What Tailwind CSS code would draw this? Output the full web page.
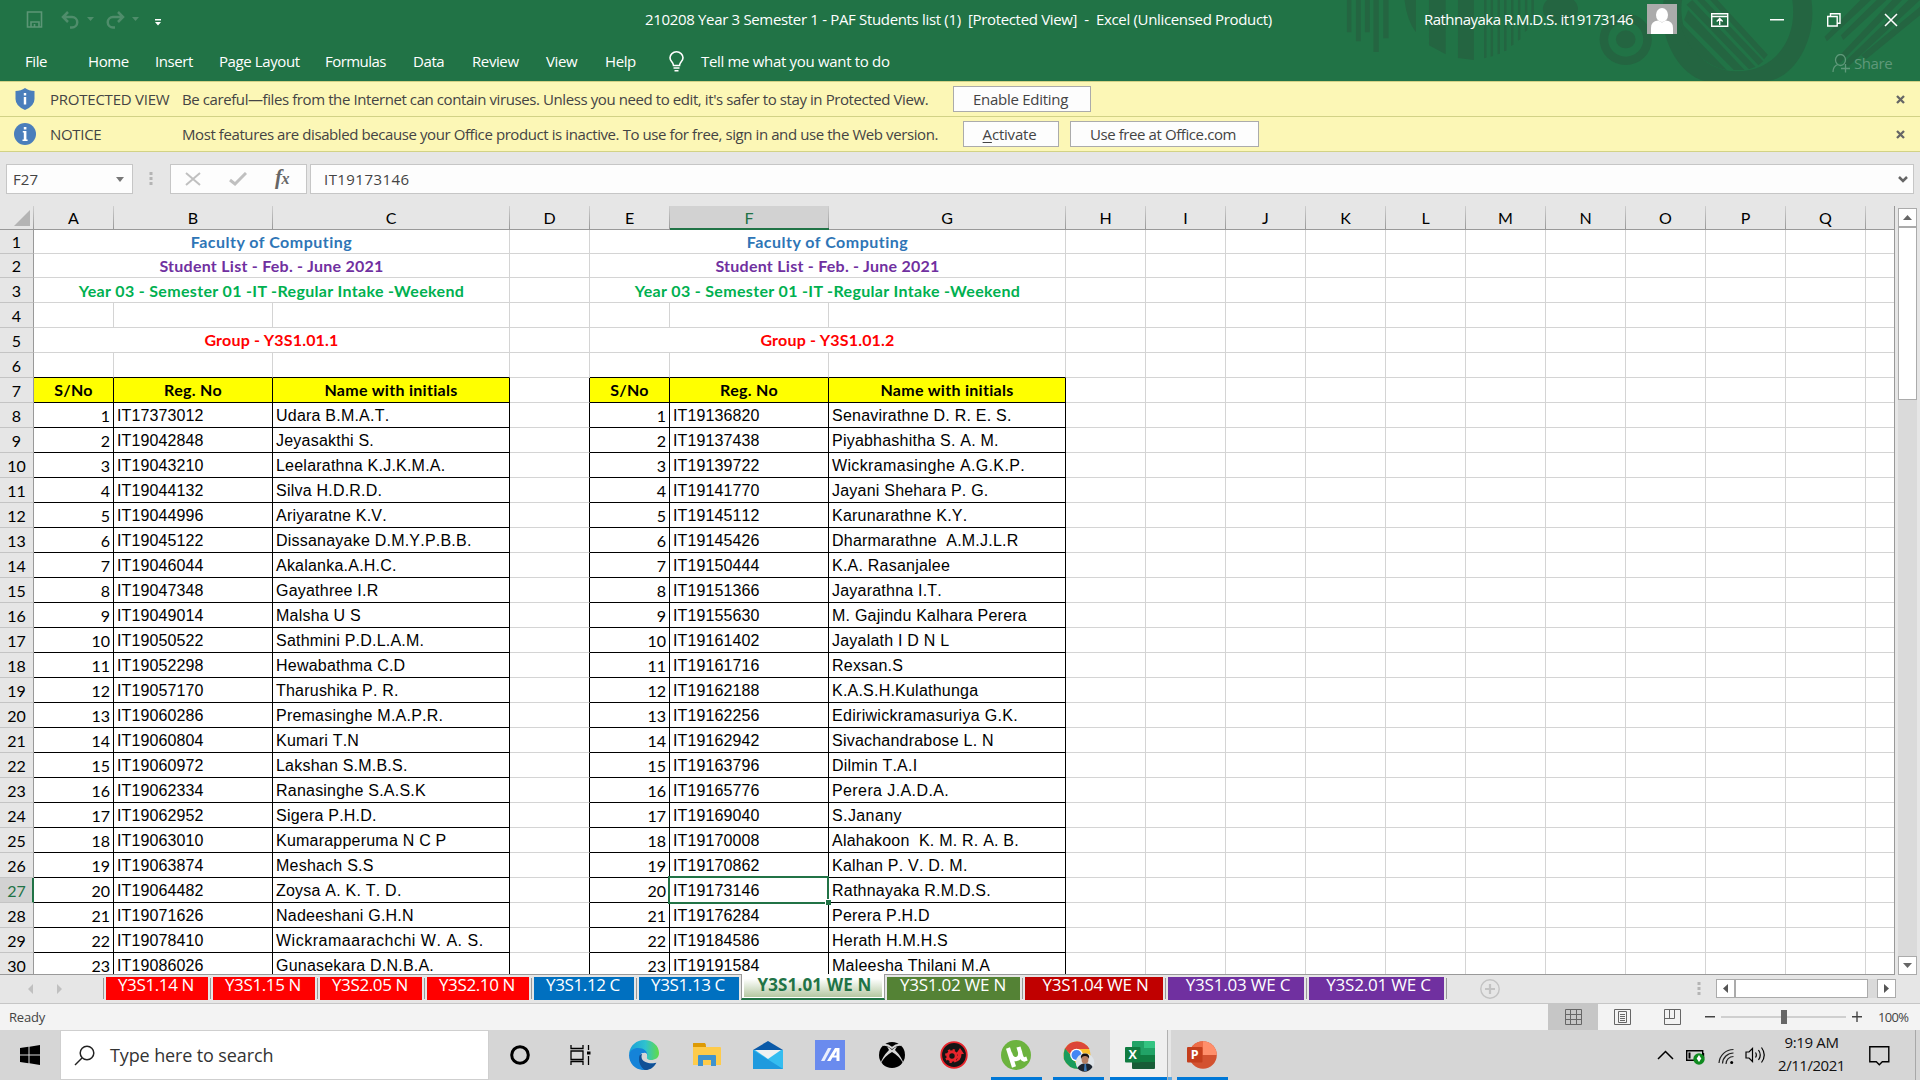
<!DOCTYPE html>
<html lang="en">
<head>
<meta charset="utf-8">
<title>210208 Year 3 Semester 1 - PAF Students list (1) - Excel</title>
<script src="https://cdn.jsdelivr.net/npm/@tailwindcss/browser@4"></script>
</head>
<body class="w-[1920px] h-[1080px] overflow-hidden flex flex-col bg-[#e6e6e6] font-['Open_Sans',sans-serif] text-[15px] text-[#444]">

<!-- Title bar and ribbon tabs -->
<header class="relative h-[81px] shrink-0 bg-[#217346] text-white flex flex-col">
  <svg class="absolute right-0 top-0" width="640" height="81" viewBox="0 0 1568 243" preserveAspectRatio="none" fill="#246541">
    <path d="M164 0h11v97h-11zM186 0h12v124h-12zM208 0h12v97h-12zM229 0h13v156h-13zM253 0h13v115h-13zM305 0h28v97q-22-35-28-97zM365 0h41v163l-41-27zM436 0h39v180l-39-6zM500 0h6v173l-6 2zM516 0h6v168l-6 2zM533 0h6v161l-6 2zM549 0h6v152l-6 2zM566 0h6v134l-6 4zM583 0h6v118l-6 4zM600 0h6v90l-6 6zM616 0h6v55l-6 8z"/>
    <circle cx="687" cy="28" r="43"/>
    <ellipse cx="847" cy="118" rx="64" ry="77"/><ellipse cx="847" cy="118" rx="43" ry="52" fill="#217346"/><ellipse cx="847" cy="118" rx="24" ry="27"/>
    <path d="M940 0H985C975 75 1010 214 1120 214C1210 214 1270 120 1255 0H1302C1318 130 1250 243 1190 243H1040C970 220 925 100 940 0Z"/>
    <path d="M980 65l115 146-22-8C1020 175 990 125 980 65zM1000 30l138 180h-26L990 60zM1010 0l155 200-16 8L996 14zM1040 0l144 184-12 12L1022 0zM1072 0l123 164-9 14L1054 0z"/>
    <path d="M1422 0h26L1340 124l-6-14zM1462 0h24L1380 120l-6-14zM1500 0h24L1372 190l-14-6zM1540 0h28L1392 200l-14-8zM1568 20v26L1436 178l-12-12z"/>
  </svg>
  <div class="relative h-[39px] flex items-center">
    <div class="w-[645px] pl-[26px] flex items-center text-white/30">
      <svg width="18" height="17" viewBox="0 0 18 17" fill="none" stroke="#5c9676" stroke-width="1.6"><path d="M1.5 1h14v15h-14zM5 16v-5h8v5M8.500 13v3"/></svg>
      <svg class="ml-[17px]" width="20" height="18" viewBox="0 0 20 18" fill="none" stroke="#4f8d6b" stroke-width="2.500"><path d="M7 1L2 6l5 5M2 6h9a5 5 0 0 1 0 10.500H9"/></svg>
      <svg class="ml-[6px] -mt-px" width="7" height="4"><path d="M0 0h7L3.500 4z" fill="#4f8d6b"/></svg>
      <svg class="ml-[11px]" width="20" height="18" viewBox="0 0 20 18" fill="none" stroke="#4f8d6b" stroke-width="2.500"><path d="M13 1l5 5-5 5M18 6H8a5 5 0 0 0 0 10.500H10"/></svg>
      <svg class="ml-[7px] -mt-px" width="7" height="4"><path d="M0 0h7L3.500 4z" fill="#4f8d6b"/></svg>
      <svg class="ml-[16px] mt-[5px]" width="6" height="7"><path d="M0 0h6v1.500H0zM0 3h6L3 6.500z" fill="#fff"/></svg>
    </div>
    <div class="w-[779px] whitespace-pre tracking-[-0.33px]">210208 Year 3 Semester 1 - PAF Students list (1)  [Protected View]  -  Excel (Unlicensed Product)</div>
    <div class="w-[223px] whitespace-nowrap tracking-[-0.53px]">Rathnayaka R.M.D.S. it19173146</div>
    <svg class="mt-[-1px]" width="30" height="30" viewBox="0 0 30 30"><path fill="#ababab" d="M0 0h30v30H0z"/><ellipse cx="15" cy="11" rx="6" ry="7" fill="#fff"/><path fill="#fff" d="M4 30V24q0-7 7-7.500l4 2 4-2q7 .5 7 7.500v6z"/></svg>
    <svg class="ml-[34px]" width="18" height="14" fill="none" stroke="#fff" stroke-width="1.400"><path d="M.7.7h16v12.500H.7zM1 3.500h16M8.700 12V6M5.700 8.500l3-3 3 3"/></svg>
    <svg class="ml-[41px]" width="14" height="2"><path fill="#fff" d="M0 0h14v1.500H0z"/></svg>
    <svg class="ml-[43px]" width="14" height="14" fill="none" stroke="#fff" stroke-width="1.400"><path d="M.7 3.500h9.500v9.500H.7zM3.500 3.500V.7h9.500v9.500H10"/></svg>
    <svg class="ml-[43px]" width="14" height="14" stroke="#fff" stroke-width="1.500"><path d="M1 1l12 12M13 1L1 13"/></svg>
  </div>
  <nav class="relative h-[42px] pl-[25px] flex items-center tracking-[-0.4px] whitespace-nowrap pb-[2px] pt-[5px]">
    <div class="w-[63px]">File</div><div class="w-[67px]">Home</div><div class="w-[64px]">Insert</div><div class="w-[106px]">Page Layout</div><div class="w-[88px] tracking-[-0.55px]">Formulas</div><div class="w-[59px]">Data</div><div class="w-[74px]">Review</div><div class="w-[59px]">View</div><div class="w-[64px]">Help</div>
    <svg class="w-[15px] shrink-0" width="15" height="21" viewBox="0 0 15 21" fill="none" stroke="#fff" stroke-width="1.600"><path d="M4.500 14.500C4.500 11 1 10.500 1 6.800a6.500 6 0 0 1 13 0C14 10.500 10.500 11 10.500 14.500zM4.500 17h6M5.500 19.800h4"/></svg>
    <div class="ml-[17px] w-[1131px] tracking-[-0.32px]">Tell me what you want to do</div>
    <svg class="mt-[3px]" width="19" height="19" fill="none" stroke="#5f997a" stroke-width="1.300"><ellipse cx="8.500" cy="6" rx="5" ry="5.500"/><path d="M1 18q0-6 5-7.500M13.500 10v8.500M9 14.500h9"/></svg>
    <div class="ml-[3px] mt-[4px] text-[#5f997a]">Share</div>
  </nav>
</header>

<!-- Message bars -->
<div class="h-[36px] shrink-0 border-y border-[#d2d286] bg-[#fcf7b6] flex items-center whitespace-nowrap">
  <svg class="ml-[15px]" width="20" height="22" viewBox="0 0 20 22"><path fill="#4a7ebb" d="M10 0q4 3 9.500 3V11q0 7-9.500 11Q.5 18 .5 11V3Q6 3 10 0z"/><path fill="#fff" d="M8.800 5h2.400v2.400H8.800zM8.800 9h2.400v7.500H8.800z"/></svg>
  <div class="ml-[15px] w-[132px] tracking-[-0.23px]">PROTECTED VIEW</div>
  <div class="w-[771px] tracking-[-0.41px]">Be careful—files from the Internet can contain viruses. Unless you need to edit, it's safer to stay in Protected View.</div>
  <div class="w-[138px] h-[26px] bg-[#fdfdfd] border border-[#ababab] flex items-center justify-center pr-[3px] tracking-[-0.28px]">Enable Editing</div>
  <svg class="ml-auto mr-[15px]" width="9" height="9" stroke="#666" stroke-width="2.300"><path d="M1 1l7 7M8 1L1 8"/></svg>
</div>
<div class="h-[35px] shrink-0 border-b border-[#d2d286] bg-[#fcf7b6] flex items-center whitespace-nowrap">
  <svg class="ml-[14px]" width="22" height="22" viewBox="0 0 22 22"><circle cx="11" cy="11" r="11" fill="#4a7ebb"/><path fill="#fff" d="M9.800 4h2.600v2.600H9.800zM8.800 8h3.600v8.500h1.200V18H8.500v-1.500h1.300V9.500h-1z"/></svg>
  <div class="ml-[14px] w-[132px] tracking-[-0.3px]">NOTICE</div>
  <div class="w-[781px] tracking-[-0.41px]">Most features are disabled because your Office product is inactive. To use for free, sign in and use the Web version.</div>
  <div class="w-[96px] h-[26px] bg-[#fdfdfd] border border-[#ababab] flex items-center justify-center pr-[3px] tracking-[-0.2px]"><span class="underline underline-offset-2">A</span>ctivate</div>
  <div class="ml-[11px] w-[189px] h-[26px] bg-[#fdfdfd] border border-[#ababab] flex items-center justify-center pr-[3px] tracking-[-0.41px]">Use free at Office.com</div>
  <svg class="ml-auto mr-[15px]" width="9" height="9" stroke="#666" stroke-width="2.300"><path d="M1 1l7 7M8 1L1 8"/></svg>
</div>

<!-- Formula bar -->
<div class="h-[54px] shrink-0 pt-[12px] flex items-start">
  <div class="ml-[6px] w-[127px] h-[30px] bg-[#fdfdfd] border border-[#c6c6c6] flex items-center pl-[6px] pr-[8px] justify-between"><span class="tracking-[0.1px]">F27</span><svg width="8" height="5"><path fill="#777" d="M0 0h8L4 5z"/></svg></div>
  <svg class="ml-[16px] mt-[8px]" width="4" height="14"><path fill="#b4b4b4" d="M.5 0h3v3h-3zM.5 5h3v3h-3zM.5 10h3v3h-3z"/></svg>
  <div class="ml-[17px] w-[137px] h-[30px] bg-[#fdfdfd] border border-[#c6c6c6] flex items-center">
    <svg class="ml-[14px]" width="16" height="14" stroke="#c0c0c0" stroke-width="2"><path d="M1 1l14 12M15 1L1 13"/></svg>
    <svg class="ml-[28px]" width="18" height="14" fill="none" stroke="#c0c0c0" stroke-width="3"><path d="M1 8l5 4L17 1"/></svg>
    <span class="ml-[28px] w-[20px] -mt-[3px] font-['Liberation_Serif',serif] italic font-bold text-[21px] text-[#666] tracking-[-0.5px]">f<span class="text-[16px]">x</span></span>
  </div>
  <div class="ml-[3px] w-[1604px] h-[30px] bg-[#fdfdfd] border border-[#c6c6c6] flex items-center justify-between pl-[13px] pr-[5px]"><span class="tracking-[0.44px]">IT19173146</span><svg width="10" height="7" fill="none" stroke="#666" stroke-width="2.500"><path d="M1 1l4 4 4-4"/></svg></div>
</div>

<!-- Worksheet -->
<main class="h-[769px] shrink-0 flex">
  <div class="w-[1895px] h-[769px] overflow-hidden border-r border-b border-[#999] bg-white font-['Lato',sans-serif] text-[16px] text-black flex flex-col">
    <div id="cols" class="flex h-[24px] shrink-0 bg-[#e6e6e6]"></div>
    <div id="rows" class="flex flex-col"></div>
  </div>
  <div class="w-[25px] pl-[3px] pt-[2px] bg-[#e6e6e6]">
    <div class="w-[19px] h-[767px] bg-[#dadada] flex flex-col">
      <div class="h-[19px] bg-white border border-[#ababab] flex items-center justify-center"><svg width="9" height="5"><path fill="#666" d="M0 5h9L4.500 0z"/></svg></div>
      <div class="h-[173px] bg-white border border-[#ababab]"></div>
      <div class="mt-auto h-[19px] bg-white border border-[#ababab] flex items-center justify-center"><svg width="9" height="5"><path fill="#666" d="M0 0h9L4.500 5z"/></svg></div>
    </div>
  </div>
</main>

<!-- Sheet tabs -->
<div class="h-[29px] shrink-0 border-b border-[#c6c6c6] flex items-start text-[17px] leading-[15px] text-white whitespace-nowrap">
  <svg class="ml-[28px] mt-[9px]" width="34" height="10"><path fill="#c0c0c0" d="M5 0v10L0 5zM29 0v10l5-5z"/></svg>
  <div class="ml-[41px] flex">
    <div class="w-px h-[21px] mt-[3px] bg-[#999]"></div>
    <div class="mx-[2px] mt-[2px] w-[102px] h-[23px] bg-[#ff0000] text-center pr-[2px] tracking-[-0.38px]">Y3S1.14 N</div><div class="w-px h-[21px] mt-[3px] bg-[#999]"></div>
    <div class="mx-[2px] mt-[2px] w-[102px] h-[23px] bg-[#ff0000] text-center pr-[2px] tracking-[-0.38px]">Y3S1.15 N</div><div class="w-px h-[21px] mt-[3px] bg-[#999]"></div>
    <div class="mx-[2px] mt-[2px] w-[102px] h-[23px] bg-[#ff0000] text-center pr-[2px] tracking-[-0.38px]">Y3S2.05 N</div><div class="w-px h-[21px] mt-[3px] bg-[#999]"></div>
    <div class="mx-[2px] mt-[2px] w-[102px] h-[23px] bg-[#ff0000] text-center pr-[2px] tracking-[-0.38px]">Y3S2.10 N</div><div class="w-px h-[21px] mt-[3px] bg-[#999]"></div>
    <div class="mx-[2px] mt-[2px] w-[100px] h-[23px] bg-[#0070c0] text-center pr-[2px] tracking-[-0.38px]">Y3S1.12 C</div><div class="w-px h-[21px] mt-[3px] bg-[#999]"></div>
    <div class="mx-[2px] mt-[2px] w-[100px] h-[23px] bg-[#0070c0] text-center pr-[2px] tracking-[-0.38px]">Y3S1.13 C</div>
    <div class="-mt-px w-[144px] h-[26px] border-x border-b-2 border-x-[#999] border-b-[#217346] bg-white px-[2px]"><div class="h-[23px] pt-[3px] pl-[3px] bg-linear-to-b from-white from-20% to-[#b5c8a2] text-center font-bold text-[#217346] tracking-[0.14px]">Y3S1.01 WE N</div></div>
    <div class="mx-[2px] mt-[2px] w-[133px] h-[23px] bg-[#548235] text-center pr-[1px] tracking-[-0.25px]">Y3S1.02 WE N</div><div class="w-px h-[21px] mt-[3px] bg-[#999]"></div>
    <div class="mx-[2px] mt-[2px] w-[138px] h-[23px] bg-[#c00000] text-center pl-[3px] tracking-[-0.25px]">Y3S1.04 WE N</div><div class="w-px h-[21px] mt-[3px] bg-[#999]"></div>
    <div class="mx-[2px] mt-[2px] w-[136px] h-[23px] bg-[#7030a0] text-center pl-[4px] tracking-[-0.2px]">Y3S1.03 WE C</div><div class="w-px h-[21px] mt-[3px] bg-[#999]"></div>
    <div class="mx-[2px] mt-[2px] w-[135px] h-[23px] bg-[#7030a0] text-center pl-[4px] tracking-[-0.2px]">Y3S2.01 WE C</div><div class="w-px h-[21px] mt-[3px] bg-[#999]"></div>
  </div>
  <svg class="ml-auto mt-[4px]" width="20" height="20" fill="none" stroke="#c3c3c3"><circle cx="10" cy="10" r="9.200" stroke-width="1.400"/><path stroke-width="2.200" d="M10 5v10M5 10h10"/></svg>
  <svg class="ml-[197px] mt-[7px]" width="4" height="14"><path fill="#b4b4b4" d="M.5 0h3v3h-3zM.5 5h3v3h-3zM.5 10h3v3h-3z"/></svg>
  <div class="ml-[15px] mr-[24px] mt-[4px] w-[180px] h-[19px] bg-[#dadada] flex">
    <div class="w-[19px] bg-white border border-[#ababab] flex items-center justify-center"><svg width="5" height="9"><path fill="#555" d="M5 0v9L0 4.500z"/></svg></div>
    <div class="w-[133px] bg-white border border-[#ababab]"></div>
    <div class="ml-auto w-[19px] bg-white border border-[#ababab] flex items-center justify-center"><svg width="5" height="9"><path fill="#555" d="M0 0v9l5-4.500z"/></svg></div>
  </div>
</div>

<!-- Status bar -->
<div class="h-[26px] shrink-0 bg-[#f3f3f3] flex items-center text-[13px]">
  <div class="pl-[9px] pt-[2px] w-[1548px] tracking-[-0.2px]">Ready</div>
  <div class="w-[50px] h-[26px] bg-[#c6c6c6] flex items-center justify-center"><svg width="17" height="16" fill="none" stroke="#666"><path d="M.5.5h16v15H.5zM5.500 0v16M11.500 0v16M0 5.500h17M0 10.500h17"/></svg></div>
  <svg class="ml-[16px]" width="17" height="16" fill="none" stroke="#666"><path d="M.5.500h16v15H.5zM4.500 2.500h8v11h-8zM6 5.500h5M6 7.500h5M6 9.500h5M6 11.500h5"/></svg>
  <svg class="ml-[33px]" width="17" height="16" fill="none" stroke="#666"><path d="M.5.500h16v15H.5zM.5 9.500h10V.5M5.500 0v9.500"/></svg>
  <svg class="ml-[24px]" width="158" height="16"><path fill="#444" d="M0 7h10v1.400H0zM147 7h10v1.400h-10zM151.300 2.500h1.400v10.500h-1.400z"/><path fill="#ababab" d="M16 7.500h125v1H16z"/><path fill="#666" d="M76 1h6v14h-6z"/></svg>
  <div class="ml-[15px] pt-[2px] tracking-[-0.7px]">100%</div>
</div>

<!-- Taskbar -->
<footer class="relative h-[50px] shrink-0 bg-[#d6d6d6] flex text-black">
  <div class="w-[60px] flex items-center justify-center"><svg width="20" height="20"><path d="M0 3l8.500-1.200V9.500H0zM9.500 1.700L20 0v9.500H9.500zM0 10.500h8.500v7.700L0 17zM9.500 10.500H20V20L9.500 18.300z"/></svg></div>
  <div class="w-[429px] border border-[#cfcfcf] bg-white flex items-center text-[18px] text-[#333]">
    <svg class="ml-[13px]" width="21" height="21" fill="none" stroke="#222" stroke-width="1.500"><circle cx="13" cy="8" r="6.800"/><path d="M8 13L1 20"/></svg>
    <div class="ml-[15px] tracking-[-0.12px]">Type here to search</div>
  </div>
  <!-- pinned apps -->
  <div class="w-[62px] flex items-center justify-center"><svg width="20" height="20" fill="none" stroke="#000" stroke-width="3"><circle cx="10" cy="10" r="8.300"/></svg></div>
  <div class="w-[59px] flex items-center justify-center"><svg width="21" height="20" fill="none" stroke="#000" stroke-width="1.300"><path d="M1 0v3.500h12V0M1 6h12v8.500H1zM1 20v-3.500h12V20M18.500 0v5M18.500 11v9"/><path stroke-width="3" d="M17 8h3.500"/></svg></div>
  <div class="w-[67px] flex items-center justify-center">
    <svg width="30" height="30" viewBox="0 0 30 30"><defs><linearGradient id="eg" x1="0" x2="1"><stop offset="0" stop-color="#1a9fd8"/><stop offset=".55" stop-color="#2fc2cf"/><stop offset="1" stop-color="#62dc45"/></linearGradient></defs><path fill="#0f5aa8" d="M10 14l4 1q3 9 13 7.500Q23 30 15 30 7 29 8 19z"/><path fill="url(#eg)" d="M0 14C1 5 8 0 15 0c9 0 15 6 15 13 0 5-4 7-8 7-3 0-5-1-4-3 1-6-8-11-18-3z"/><path fill="#1583d8" d="M0 15C1 10 5 8 9 8c6 0 9.500 3.500 9.500 7.500C16 11 10 13 10 18c0 5 3 9 6 12C7 30.500 0 24 0 15z"/><path fill="#0f5096" d="M10.500 17C9 22 12 28 16 30c5 0 9-2.500 11.500-7.500-3.500 2-8 1.500-11-.5-3-2-4-5-3-8-1.500 0-2.500 1-3 3z"/><path fill="#d6d6d6" d="M12.500 16.500c0-3 3-5 5.500-2.500.5 2-1 3 0 4.500 2 3.500 7 3 10 2l.5 1.500c-3 1.500-8 2-12 0-3-1-4-3-4-5.500z"/></svg></div>
  <div class="w-[60px] flex items-center justify-center"><svg width="28" height="24" viewBox="0 0 28 24"><path fill="#dd9a05" d="M0 1q0-1 1-1h10l2 3v3H0z"/><path fill="#fecb4b" d="M0 4h27q1 0 1 1v17H0z"/><path fill="#dd9a05" d="M0 1q0-1 1-1h11l1 2-1.500 2H0z"/><path fill="#3f93cf" d="M5 13q0-1 1-1h16q1 0 1 1v10h-5v-6h-8v6H5z"/></svg></div>
  <div class="w-[62px] flex items-center justify-center"><svg width="30" height="30" viewBox="0 0 30 30"><path fill="#0b5aa8" d="M0 10L15 1l15 9v3H0z"/><path fill="#35bdf0" d="M0 10h30v19H0z"/><path fill="#1f9ade" d="M0 10l30 19H0z"/><path fill="#f1f1f1" d="M2 10h26l-13 9z"/></svg></div>
  <div class="w-[62px] flex items-center justify-center"><svg width="30" height="30" viewBox="0 0 30 30"><path fill="#6a8bee" d="M0 0h30v30H0z"/><path fill="#fff" opacity=".85" d="M6 21h3.500l7-13H13z"/><path fill="#fff" d="M12 21l8-13h4.500v13h-3v-3.500h-4L15.500 21zM19 15.500h2.500V11z"/></svg></div>
  <div class="w-[62px] flex items-center justify-center"><svg width="26" height="26" viewBox="0 0 26 26"><circle cx="13" cy="13" r="13"/><path fill="none" stroke="#d6d6d6" stroke-width="2" d="M4 3Q8 2 13 6q5-4 9-3"/><path fill="#d6d6d6" d="M8 4.500Q11 5.500 13 8q2-2.500 5-3.500l-2 3.500q7 7 8.500 14-4-8-11.500-12Q5.500 14 1.500 22 3 15 10 8z"/></svg></div>
  <div class="w-[62px] flex items-center justify-center"><svg width="28" height="28" viewBox="0 0 28 28"><circle cx="14" cy="14" r="12.800" fill="#151515" stroke="#e8252c" stroke-width="1.800"/><circle cx="12" cy="15" r="4.200" fill="none" stroke="#e8252c" stroke-width="3"/><circle cx="12" cy="15" r="6" fill="none" stroke="#e8252c" stroke-width="2" stroke-dasharray="2.300 2.400"/><path fill="#e8252c" d="M20 7l4 6h-2.500q0 7-7 8 4-3 3.500-8h-2z"/></svg></div>
  <div class="relative w-[62px] flex items-center justify-center"><svg width="30" height="30" viewBox="0 0 30 30"><circle cx="15" cy="15" r="15" fill="#6cb33e"/><path fill="none" stroke="#fff" stroke-width="4.200" d="M7 8l6 19M9 13q2 7 6.500 6t3.500-7l-1.500-5M19 12q1.500 7 4 7.500l3-1"/></svg><div class="absolute left-[6px] bottom-0 w-[51px] h-[3px] bg-[#0078d7]"></div></div>
  <div class="relative w-[63px] flex items-center justify-center"><svg class="mt-[2px]" width="32" height="31" viewBox="0 0 32 31"><circle cx="14" cy="14" r="13.500" fill="#fbc02d"/><path fill="#1a9c5c" d="M2 7l8 10 6 11Q5 28 .8 18 0 12 2 7z"/><path fill="#dc4638" d="M2 7.500Q6 .5 14 .5t12.500 7.500H14q-6 0-6 6z"/><circle cx="13.500" cy="14" r="6.300" fill="#fff"/><circle cx="13.500" cy="14" r="5" fill="#4285f4"/><circle cx="22" cy="21.500" r="9.300" fill="#dfe4e8"/><path fill="#1c2530" d="M14.500 27q2-4 6-4.500h4q4 .5 5 3.500-3 4.800-8 4.800-4 0-7-3.800z"/><ellipse cx="22" cy="18.500" rx="3.400" ry="4.300" fill="#b67f63"/><path fill="#15110f" d="M18 18q-1-5.500 4-5.500t4 5.500q-1-3-4-3t-4 3z"/><path fill="#3b78b5" d="M21.500 23h1.500l.8 7h-2.800z"/></svg><div class="absolute left-[6px] bottom-0 w-[51px] h-[3px] bg-[#0078d7]"></div></div>
  <div class="relative w-[57px] bg-[#efefef] flex items-center justify-center"><svg class="ml-[3px]" width="30" height="28" viewBox="0 0 30 28"><path fill="#21a366" d="M7 1q0-1 1-1h11v14H7z"/><path fill="#33c481" d="M19 0h10q1 0 1 1v6H19z"/><path fill="#21a366" d="M19 7h11v7H19z"/><path fill="#107c41" d="M19 14h11v7H19zM7 14h12v7H7z"/><path fill="#185c37" d="M7 21h23v6q0 1-1 1H8q-1 0-1-1z"/><rect y="6" width="15.500" height="15.500" rx="1" fill="#107c41"/><text x="7.700" y="18.300" text-anchor="middle" fill="#fff" font-family="Open Sans, sans-serif" font-weight="700" font-size="12.500">X</text></svg><div class="absolute left-0 bottom-0 w-[57px] h-[3px] bg-[#0078d7]"></div></div>
  <div class="relative w-[4px] border-l border-[#b0b0b0] bg-[#e6e6e6]"><div class="absolute left-0 bottom-0 w-[4px] h-[3px] bg-[#5ba7e2]"></div></div>
  <div class="relative w-[62px] flex items-center justify-center"><svg class="-ml-px" width="30" height="28" viewBox="0 0 30 28"><circle cx="16" cy="14" r="13.800" fill="#d35230"/><path fill="#ed6c47" d="M2.200 14A13.800 13.800 0 0 1 16 .2V14z"/><path fill="#ff8f6b" d="M16 .2A13.800 13.800 0 0 1 29.800 14H16z"/><rect y="6" width="15.500" height="15.500" rx="1" fill="#c43e1c"/><text x="7.700" y="18.300" text-anchor="middle" fill="#fff" font-family="Open Sans, sans-serif" font-weight="700" font-size="12.500">P</text></svg><div class="absolute left-[6px] bottom-0 w-[51px] h-[3px] bg-[#0078d7]"></div></div>

  <!-- tray -->
  <div class="ml-auto flex items-center">
    <svg width="17" height="10" fill="none" stroke="#000" stroke-width="1.500"><path d="M1 9l7.500-7.500L16 9"/></svg>
    <svg class="ml-[12px] mt-[4px]" width="20" height="16" viewBox="0 0 20 16"><path fill="none" stroke="#000" stroke-width="1.400" d="M.7 1.700h16v9.600H.7zM17.500 4v5"/><path d="M2.500 3.500h2v6h-2z"/><circle cx="13" cy="10" r="5.700" fill="#0f8a1f"/><path fill="#fff" d="M13 6l2.300 3.500L13 13l-2.300-3.500z"/></svg>
    <svg class="ml-[12px] mt-[2px]" width="17" height="17" fill="none" stroke="#222" stroke-width="1.200"><path d="M1 15A14.500 14.500 0 0 1 15.500 1.500M4.500 15.500A11 11 0 0 1 15.500 5M8 16a7.500 7.500 0 0 1 7.500-7.500"/><circle cx="13.700" cy="14.500" r="1.500" fill="#000" stroke="none"/></svg>
    <svg class="ml-[10px]" width="21" height="18" fill="none" stroke="#000" stroke-width="1.200"><path d="M1 6h3l3.500-3.500v13L4 12H1zM10.500 6.500q1.700 2.500 0 5M13.500 4q3.500 5 0 10M16.500 1.500q5.500 7.500 0 15"/></svg>
    <div class="ml-[11px] w-[69px] text-center leading-[23px] -mt-[2px] whitespace-nowrap text-[#111]"><div class="tracking-[-0.36px]">9:19 AM</div><div class="tracking-[-0.45px]">2/11/2021</div></div>
    <svg class="ml-[23px] mt-px" width="21" height="20" fill="none" stroke="#000" stroke-width="1.400"><path d="M.8.8h19v15h-6.500l-3 3-3-3H.8z"/></svg>
    <div class="ml-[25px] mr-[4px] w-px h-[50px] bg-[#a8a8a8]"></div>
  </div>
</footer>

<script>
const names = 'ABCDEFGHIJKLMNOPQ'.split('');
const W = {A:'w-[80px]',B:'w-[159px]',C:'w-[237px]',D:'w-[80px]',E:'w-[80px]',F:'w-[159px]',G:'w-[237px]'};
const left = [['IT17373012','Udara B.M.A.T.'],['IT19042848','Jeyasakthi S.'],['IT19043210','Leelarathna K.J.K.M.A.'],['IT19044132','Silva H.D.R.D.'],['IT19044996','Ariyaratne K.V.'],['IT19045122','Dissanayake D.M.Y.P.B.B.'],['IT19046044','Akalanka.A.H.C.'],['IT19047348','Gayathree I.R'],['IT19049014','Malsha U S'],['IT19050522','Sathmini P.D.L.A.M.'],['IT19052298','Hewabathma C.D'],['IT19057170','Tharushika P. R.'],['IT19060286','Premasinghe M.A.P.R.'],['IT19060804','Kumari T.N'],['IT19060972','Lakshan S.M.B.S.'],['IT19062334','Ranasinghe S.A.S.K'],['IT19062952','Sigera P.H.D.'],['IT19063010','Kumarapperuma N C P'],['IT19063874','Meshach S.S'],['IT19064482','Zoysa A. K. T. D.'],['IT19071626','Nadeeshani G.H.N'],['IT19078410','Wickramaarachchi W. A. S.','tracking-[0.52px]'],['IT19086026','Gunasekara D.N.B.A.']];
const right = [['IT19136820','Senavirathne D. R. E. S.'],['IT19137438','Piyabhashitha S. A. M.'],['IT19139722','Wickramasinghe A.G.K.P.','tracking-[0.35px]'],['IT19141770','Jayani Shehara P. G.'],['IT19145112','Karunarathne K.Y.'],['IT19145426','Dharmarathne  A.M.J.L.R'],['IT19150444','K.A. Rasanjalee'],['IT19151366','Jayarathna I.T.'],['IT19155630','M. Gajindu Kalhara Perera'],['IT19161402','Jayalath I D N L'],['IT19161716','Rexsan.S'],['IT19162188','K.A.S.H.Kulathunga'],['IT19162256','Ediriwickramasuriya G.K.','tracking-[0.3px]'],['IT19162942','Sivachandrabose L. N'],['IT19163796','Dilmin T.A.I'],['IT19165776','Perera J.A.D.A.','tracking-[0.4px]'],['IT19169040','S.Janany','tracking-[0.4px]'],['IT19170008','Alahakoon  K. M. R. A. B.'],['IT19170862','Kalhan P. V. D. M.'],['IT19173146','Rathnayaka R.M.D.S.'],['IT19176284','Perera P.H.D'],['IT19184586','Herath H.M.H.S'],['IT19191584','Maleesha Thilani M.A']];

const sep = '<div class="w-px h-full bg-linear-to-b from-[#cfcfcf] to-[#999]"></div>';
document.getElementById('cols').innerHTML =
  '<div class="w-[34px] flex border-b border-[#999]"><div class="flex-1 flex items-end justify-end pr-[3px] pb-[3px]"><svg width="16" height="16"><path fill="#b4b4b4" d="M16 0v16H0z"/></svg></div>' + sep + '</div>' +
  names.map(n => `<div class="${W[n] || 'w-[80px]'} flex ${n === 'F' ? 'bg-[#d2d2d2] text-[#217346] border-b-2 border-[#217346]' : 'border-b border-[#999]'}"><div class="flex-1 text-center leading-[23px]">${n}</div>${sep}</div>`).join('') +
  '<div class="flex-1 border-b border-[#999]"></div>';

const titles = {
  1: ['Faculty of Computing', 'text-[#2e75b6] leading-[23px] tracking-[0.5px]'],
  2: ['Student List - Feb. - June 2021', 'text-[#7030a0] leading-[23px] tracking-[0.26px]'],
  3: ['Year 03 - Semester 01 -IT -Regular Intake -Weekend', 'text-[#00b050] leading-[25px] tracking-[0.34px]'],
  5: ['Group - Y3S1.01.', 'text-[#ff0000] leading-[23px] tracking-[0.2px]']
};
const grey = 'border-[#d4d4d4]', black = 'border-black';

function block(r, side) {
  const data = side ? right : left;
  if (titles[r]) {
    const [t, c] = titles[r];
    return `<div class="w-[476px] border-r border-b ${grey} ${c} font-bold text-center">${t}${r === 5 ? side + 1 : ''}</div>`;
  }
  const widths = ['w-[80px]','w-[159px]','w-[237px]'];
  if (r < 7) return widths.map(w => `<div class="${w} border-r border-b border-r-[#d4d4d4] ${r === 6 ? 'border-b-black' : 'border-b-[#d4d4d4]'}"></div>`).join('');
  if (r === 7) return ['S/No','Reg. No','Name with initials'].map((t, i) => `<div class="${widths[i]} border-r border-b ${black} bg-[#ffff00] font-bold text-center leading-[23px] tracking-[0.3px]">${t}</div>`).join('');
  const [id, nm, track] = data[r - 8], active = r === 27 && side;
  const arial = `font-['Liberation_Sans',sans-serif] leading-[26px] pl-[3px] whitespace-pre [font-kerning:none]`;
  return `<div class="${widths[0]} border-r border-b ${black} text-right pr-[3px] leading-[26px]">${r - 7}</div>` +
    `<div class="${widths[1]} border-r border-b ${black} ${arial} tracking-[0.1px] ${active ? 'relative' : ''}">${id}${active ? '<div class="absolute -left-[2px] -top-[2px] w-[161px] h-[28px] border-2 border-[#217346]"></div><div class="absolute -right-[3px] -bottom-[3px] w-[6px] h-[6px] bg-[#217346] border-l border-t border-white"></div>' : ''}</div>` +
    `<div class="${widths[2]} border-r border-b ${black} ${arial} ${track || 'tracking-[0.22px]'}">${nm}</div>`;
}

let out = '';
for (let r = 1; r <= 30; r++) {
  const sel = r === 27;
  out += `<div class="flex ${r < 3 ? 'h-[24px]' : 'h-[25px]'} shrink-0">` +
    `<div class="w-[34px] border-b border-b-[#c4c4c4] ${sel ? 'border-r-2 border-r-[#217346] bg-[#d2d2d2] text-[#217346] pl-px' : 'border-r border-r-[#999] bg-[#e6e6e6]'} text-center ${r < 3 ? 'leading-[23px]' : 'leading-[25px]'}">${r}</div>` +
    block(r, 0) +
    `<div class="w-[80px] border-r border-b border-b-[#d4d4d4] ${r > 6 ? 'border-r-black' : 'border-r-[#d4d4d4]'}"></div>` +
    block(r, 1) +
    names.slice(7).map(() => `<div class="w-[80px] border-r border-b ${grey}"></div>`).join('') +
    `<div class="flex-1 border-b ${grey}"></div></div>`;
}
document.getElementById('rows').innerHTML = out;
</script>
</body>
</html>
